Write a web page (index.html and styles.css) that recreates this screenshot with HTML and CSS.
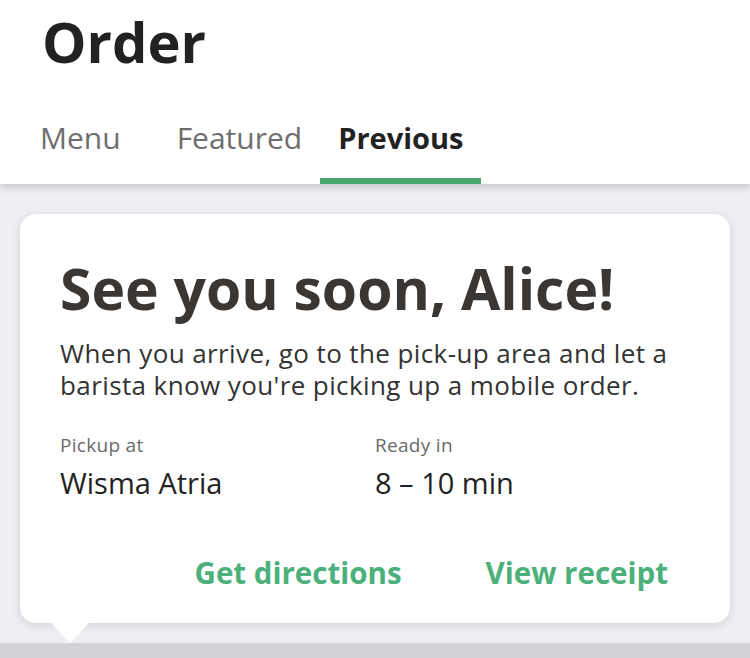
FILE: index.html
```html
<!DOCTYPE html>
<html lang="en">
<head>
  <meta charset="UTF-8" />
  <meta name="viewport" content="width=device-width, initial-scale=1.0"/>
  <title>Order</title>
  <link rel="stylesheet" href="styles.css">
</head>
<body>
  <header class="top">
    <h1>Order</h1>
    <nav class="tabs">
      <a class="tab">Menu</a>
      <a class="tab">Featured</a>
      <a class="tab active">Previous</a>
    </nav>
  </header>

  <main class="feed">
    <section class="card">
      <h2>See you soon, Alice!</h2>
      <p class="intro">When you arrive, go to the pick-up area and let a barista know you're picking up a mobile order.</p>
      <div class="details">
        <div class="detail">
          <span class="label">Pickup at</span>
          <span class="value">Wisma Atria</span>
        </div>
        <div class="detail">
          <span class="label">Ready in</span>
          <span class="value">8 – 10 min</span>
        </div>
      </div>
      <div class="actions">
        <a class="action">Get directions</a>
        <a class="action">View receipt</a>
      </div>
    </section>
  </main>

  <div class="bottom"></div>
</body>
</html>
```

FILE: styles.css
```css
* {
  box-sizing: border-box;
}
html, body {
  margin: 0;
  height: 100%;
}
body {
  font-family: "Open Sans", "Noto Sans", sans-serif;
  background-color: #efeff3;
  color: #333;
  display: flex;
  flex-direction: column;
  overflow: hidden;
}
.top {
  background: white;
  padding: 0 0 0 40px;
  box-shadow: 0 3px 8px rgba(0,0,0,0.18);
  position: relative;
  z-index: 2;
  flex: none;
}
h1 {
  margin: 0;
  padding-top: 6px;
  height: 94px;
  font-size: 56px;
  font-weight: 700;
  color: #222;
  line-height: 70px;
  padding-left: 2px;
}
.tabs {
  display: flex;
  height: 90px;
}
.tab {
  font-size: 30px;
  color: #6e6e6e;
  line-height: 88px;
  padding: 0 18px;
  border-bottom: 6px solid transparent;
  height: 90px;
}
.tab:first-child {
  padding-left: 0;
  padding-right: 38px;
}
.tab.active {
  font-size: 29px;
  color: #222;
  font-weight: 700;
  border-bottom-color: #4aa56d;
}
.feed {
  flex: 1;
  padding: 30px 20px 20px;
}
.card {
  background: white;
  border-radius: 16px;
  padding: 38px 40px 30px;
  box-shadow: 0 2px 10px rgba(0,0,0,0.13);
  position: relative;
}
.card::after {
  content: "";
  position: absolute;
  left: 30px;
  bottom: -20px;
  border-left: 20px solid transparent;
  border-right: 20px solid transparent;
  border-top: 21px solid white;
}
h2 {
  margin: 0;
  font-size: 57px;
  font-weight: 700;
  color: #3a3634;
  line-height: 72px;
}
.intro {
  margin: 13px 0 0;
  font-size: 26px;
  letter-spacing: 0.4px;
  line-height: 32px;
  color: #333;
}
.details {
  display: grid;
  grid-template-columns: 315px 1fr;
  margin-top: 32px;
}
.detail {
  display: flex;
  flex-direction: column;
}
.label {
  font-size: 19px;
  letter-spacing: 0.3px;
  color: #6a6a6a;
  line-height: 24px;
}
.value {
  font-size: 29px;
  color: #222;
  margin-top: 9px;
  line-height: 34px;
}
.actions {
  display: flex;
  justify-content: flex-end;
  gap: 84px;
  margin-top: 53px;
  padding-right: 22px;
}
.action {
  font-size: 29.5px;
  font-weight: 700;
  color: #4bb07a;
  line-height: 40px;
}
.bottom {
  height: 15px;
  background: #d3d3d7;
  flex: none;
}
```
